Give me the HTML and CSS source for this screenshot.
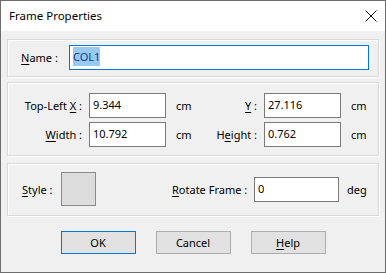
FILE: index.html
```html
<!DOCTYPE html>
<html lang="en">
<head>
  <meta charset="UTF-8" />
  <title>Frame Properties</title>
  <link rel="stylesheet" href="styles.css">
</head>
<body>
  <div class="window">
    <div class="titlebar">
      <span class="title">Frame Properties</span>
      <svg class="close" width="12" height="12" viewBox="0 0 12 12">
        <path d="M0.5 0.5 L11.5 11.5 M11.5 0.5 L0.5 11.5" stroke="#111" stroke-width="1" fill="none"/>
      </svg>
    </div>

    <div class="content">
      <div class="group name-group">
        <label class="lbl name-lbl"><u>N</u>ame :</label>
        <div class="field name-field focused"><span class="sel">COL1</span></div>
      </div>

      <div class="group pos-group">
        <label class="lbl right">Top-Left <u>X</u> :</label>
        <div class="field">9.344</div>
        <span class="unit">cm</span>
        <label class="lbl right"><u>Y</u> :</label>
        <div class="field">27.116</div>
        <span class="unit">cm</span>

        <label class="lbl right"><u>W</u>idth :</label>
        <div class="field">10.792</div>
        <span class="unit">cm</span>
        <label class="lbl right">H<u>e</u>ight :</label>
        <div class="field">0.762</div>
        <span class="unit">cm</span>
      </div>

      <div class="group style-group">
        <label class="lbl style-lbl"><u>S</u>tyle :</label>
        <div class="swatch"></div>
        <label class="lbl rotate-lbl"><u>R</u>otate Frame :</label>
        <div class="field rotate-field">0</div>
        <span class="unit deg">deg</span>
      </div>

      <div class="buttons">
        <button class="btn default">OK</button>
        <button class="btn">Cancel</button>
        <button class="btn"><u>H</u>elp</button>
      </div>
    </div>
  </div>
</body>
</html>
```

FILE: styles.css
```css
html, body {
  margin: 0;
  padding: 0;
  background: #f0f0f0;
}
body {
  font-family: "Noto Sans", "Liberation Sans", sans-serif;
  font-size: 11px;
  color: #000;
}
.window {
  width: 386px;
  height: 273px;
  box-sizing: border-box;
  border: 1px solid #6d6d6d;
  background: #f0f0f0;
  overflow: hidden;
}
.titlebar {
  height: 30px;
  background: #fff;
  display: flex;
  align-items: center;
  justify-content: space-between;
  padding: 0 9px 0 8px;
}
.title {
  font-size: 11.5px;
  padding-bottom: 1px;
}
.close {
  display: block;
  margin-right: -1px;
}
.content {
  padding: 8px 6px 0 6px;
}
.group {
  border: 1px solid #d8d8d8;
  box-shadow: inset 1px 1px 0 #fff, 1px 1px 0 #fff;
  box-sizing: border-box;
}
.lbl u, .btn u {
  text-decoration: underline;
  text-underline-offset: 2px;
}
.field {
  background: #fff;
  border: 1px solid #7a7a7a;
  box-sizing: border-box;
  height: 25px;
  line-height: 22px;
  padding: 0 3px;
  white-space: nowrap;
}
.field.focused {
  border-color: #0078d7;
}
.sel {
  background: #99c9ef;
  color: #0b3d91;
  padding: 2px 0;
}

/* name */
.name-group {
  height: 38px;
  display: flex;
  align-items: center;
  padding: 0 9px 1px 13px;
}
.name-lbl {
  width: 48px;
  flex: none;
}
.name-field {
  flex: 1;
}

/* position / size */
.pos-group {
  margin-top: 5px;
  height: 74px;
  display: grid;
  grid-template-columns: 81px 77px 48px 50px 77px auto;
  grid-template-rows: 25px 25px;
  row-gap: 4px;
  align-items: center;
  padding: 10px 0 0 0;
}
.lbl.right {
  text-align: right;
  padding-right: 7px;
  white-space: nowrap;
}
.unit {
  padding-left: 10px;
}

/* style / rotate */
.style-group {
  margin-top: 7px;
  height: 53px;
  display: flex;
  align-items: center;
  padding: 0 0 1px 14px;
}
.style-lbl {
  width: 39px;
}
.swatch {
  width: 35px;
  height: 34px;
  box-sizing: border-box;
  background: #dcdcdc;
  border: 1px solid #8a8a8a;
}
.rotate-lbl {
  margin-left: 76px;
  width: 82px;
  white-space: nowrap;
}
.rotate-field {
  width: 85px;
}
.deg {
  padding-left: 8px;
}

/* buttons */
.buttons {
  display: flex;
  justify-content: center;
  gap: 20px;
  margin-top: 15px;
}
.btn {
  width: 75px;
  height: 23px;
  box-sizing: border-box;
  background: #e1e1e1;
  border: 1px solid #adadad;
  font-family: inherit;
  font-size: 11px;
  padding: 0;
  color: #000;
}
.btn.default {
  border-color: #0078d7;
}
```
